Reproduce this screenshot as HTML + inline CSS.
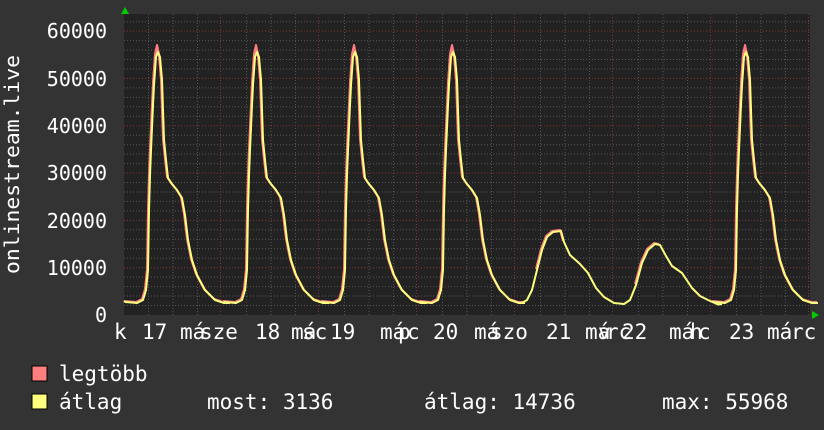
<!DOCTYPE html>
<html><head><meta charset="utf-8"><style>
html,body{margin:0;padding:0;background:#333;}
svg{display:block}
text{font-family:"DejaVu Sans Mono","Liberation Mono",monospace;fill:#fff;}
</style></head><body>
<svg width="824" height="430" viewBox="0 0 824 430" xmlns="http://www.w3.org/2000/svg">
<defs>
<path id="big" d="M-33,302 L-21,303 L-15,300 L-12,290 L-10,270 L-9,210 L-8,175 L-7,150 L-5,105 L-4,85 L-2,57 L0,52 L2,57 L4,80 L6,140 L8,160 L10,178 L14,184 L19,190 L24,198 L27,215 L30,240 L34,260 L39,275 L47,290 L57,300 L66,303 L72,303"/>
<path id="pk" d="M-4,85 L-2,55 L0,46 L2,55 L4,80"/>
</defs>
<rect x="0" y="0" width="824" height="430" fill="#333"/>
<rect x="124" y="14" width="686" height="301" fill="#222"/>
<g stroke="#555" stroke-width="1" stroke-dasharray="1,2" fill="none">
<path d="M124,305.5H810M124,296H810M124,286.6H810M124,277.1H810M124,258.2H810M124,248.7H810M124,239.3H810M124,229.8H810M124,210.9H810M124,201.4H810M124,192H810M124,182.5H810M124,163.6H810M124,154.1H810M124,144.7H810M124,135.2H810M124,116.3H810M124,106.8H810M124,97.4H810M124,87.9H810M124,69H810M124,59.5H810M124,50.1H810M124,40.6H810M124,21.7H810"/>
<path d="M148.5,14V315M173,14V315M197.5,14V315M246.5,14V315M271,14V315M295.5,14V315M344.5,14V315M369,14V315M393.5,14V315M442.5,14V315M467,14V315M491.5,14V315M540.5,14V315M565,14V315M589.5,14V315M638.5,14V315M663,14V315M687.5,14V315M736.5,14V315M761,14V315M785.5,14V315"/>
</g>
<g stroke="#8a3030" stroke-width="1" stroke-dasharray="1,2" fill="none">
<path d="M124,267.7H810M124,220.4H810M124,173H810M124,125.8H810M124,78.4H810M124,31H810"/>
<path d="M220.5,14V315M318.5,14V315M416.5,14V315M514.5,14V315M612.5,14V315M710.5,14V315M808.5,14V315"/>
</g>
<g fill="none" stroke-linejoin="round">
<g stroke="#ff7f7f" stroke-width="2" transform="translate(-1,-1)">
<use href="#big" x="158"/><use href="#big" x="257"/><use href="#big" x="355"/><use href="#big" x="453"/><use href="#big" x="746"/>
<use href="#pk" x="158"/><use href="#pk" x="257"/><use href="#pk" x="355"/><use href="#pk" x="453"/><use href="#pk" x="746"/>
<path d="M537,270 L542,250 L547,237 L553,232 L561,231 L564,242"/>
<path d="M636,285 L642,263 L648,250 L655,244 L660,245"/>
</g>
<g stroke="#ffff7f" stroke-width="2">
<path d="M124,301 L125,302"/>
<use href="#big" x="158"/><use href="#big" x="257"/><use href="#big" x="355"/><use href="#big" x="453"/><use href="#big" x="746"/>
<path d="M522,303 L527,300 L532,290 L537,270 L542,250 L547,237 L553,232 L561,231 L564,242 L570,255 L580,264 L588,273 L596,288 L604,297 L614,303 L624,304 L630,300 L636,285 L642,263 L648,250 L655,244 L660,245 L666,256 L672,266 L682,273 L692,288 L700,296 L708,300 L718,304.5 L722,304"/>
</g>
</g>
<path d="M121,14L125,7L129,14Z" fill="#0c0"/>
<path d="M812,311L819,315L812,319Z" fill="#0c0"/>
<g font-size="20" text-anchor="end">
<text x="107" y="322">0</text>
<text x="107" y="275">10000</text>
<text x="107" y="228">20000</text>
<text x="107" y="180">30000</text>
<text x="107" y="133">40000</text>
<text x="107" y="86">50000</text>
<text x="107" y="38">60000</text>
</g>
<text font-size="20" transform="translate(19,274) rotate(-90)" textLength="219" lengthAdjust="spacingAndGlyphs">onlinestream.live</text>
<g font-size="21">
<text x="114" y="339">k</text>
<text x="142" y="339">17</text>
<text x="180" y="339">má</text><text x="200" y="339">sze</text>
<text x="255" y="339">18</text>
<text x="291" y="339">má</text><text x="302" y="339">sc</text>
<text x="330" y="339">19</text>
<text x="380" y="339">má</text><text x="398" y="339">p</text><text x="407" y="339">c</text>
<text x="433" y="339">20</text>
<text x="474" y="339">má</text><text x="490" y="339">szo</text>
<text x="546" y="339">21</text>
<text x="585" y="339">má</text><text x="598" y="339">v</text><text x="606" y="339">rc</text>
<text x="622" y="339">22</text>
<text x="669" y="339">má</text><text x="690" y="339">h</text><text x="698" y="339">c</text>
<text x="729" y="339">23</text>
<text x="767" y="339">má</text><text x="791" y="339">rc</text>
</g>
<rect x="32" y="366" width="15" height="15" fill="#ff7f7f" stroke="#000" stroke-width="1"/>
<rect x="32" y="394" width="15" height="15" fill="#ffff7f" stroke="#000" stroke-width="1"/>
<g font-size="21">
<text x="59" y="381">legtöbb</text>
<text x="59" y="409">átlag</text>
<text x="207" y="409">most: 3136</text>
<text x="424" y="409">átlag: 14736</text>
<text x="662" y="409">max: 55968</text>
</g>
</svg>
</body></html>
